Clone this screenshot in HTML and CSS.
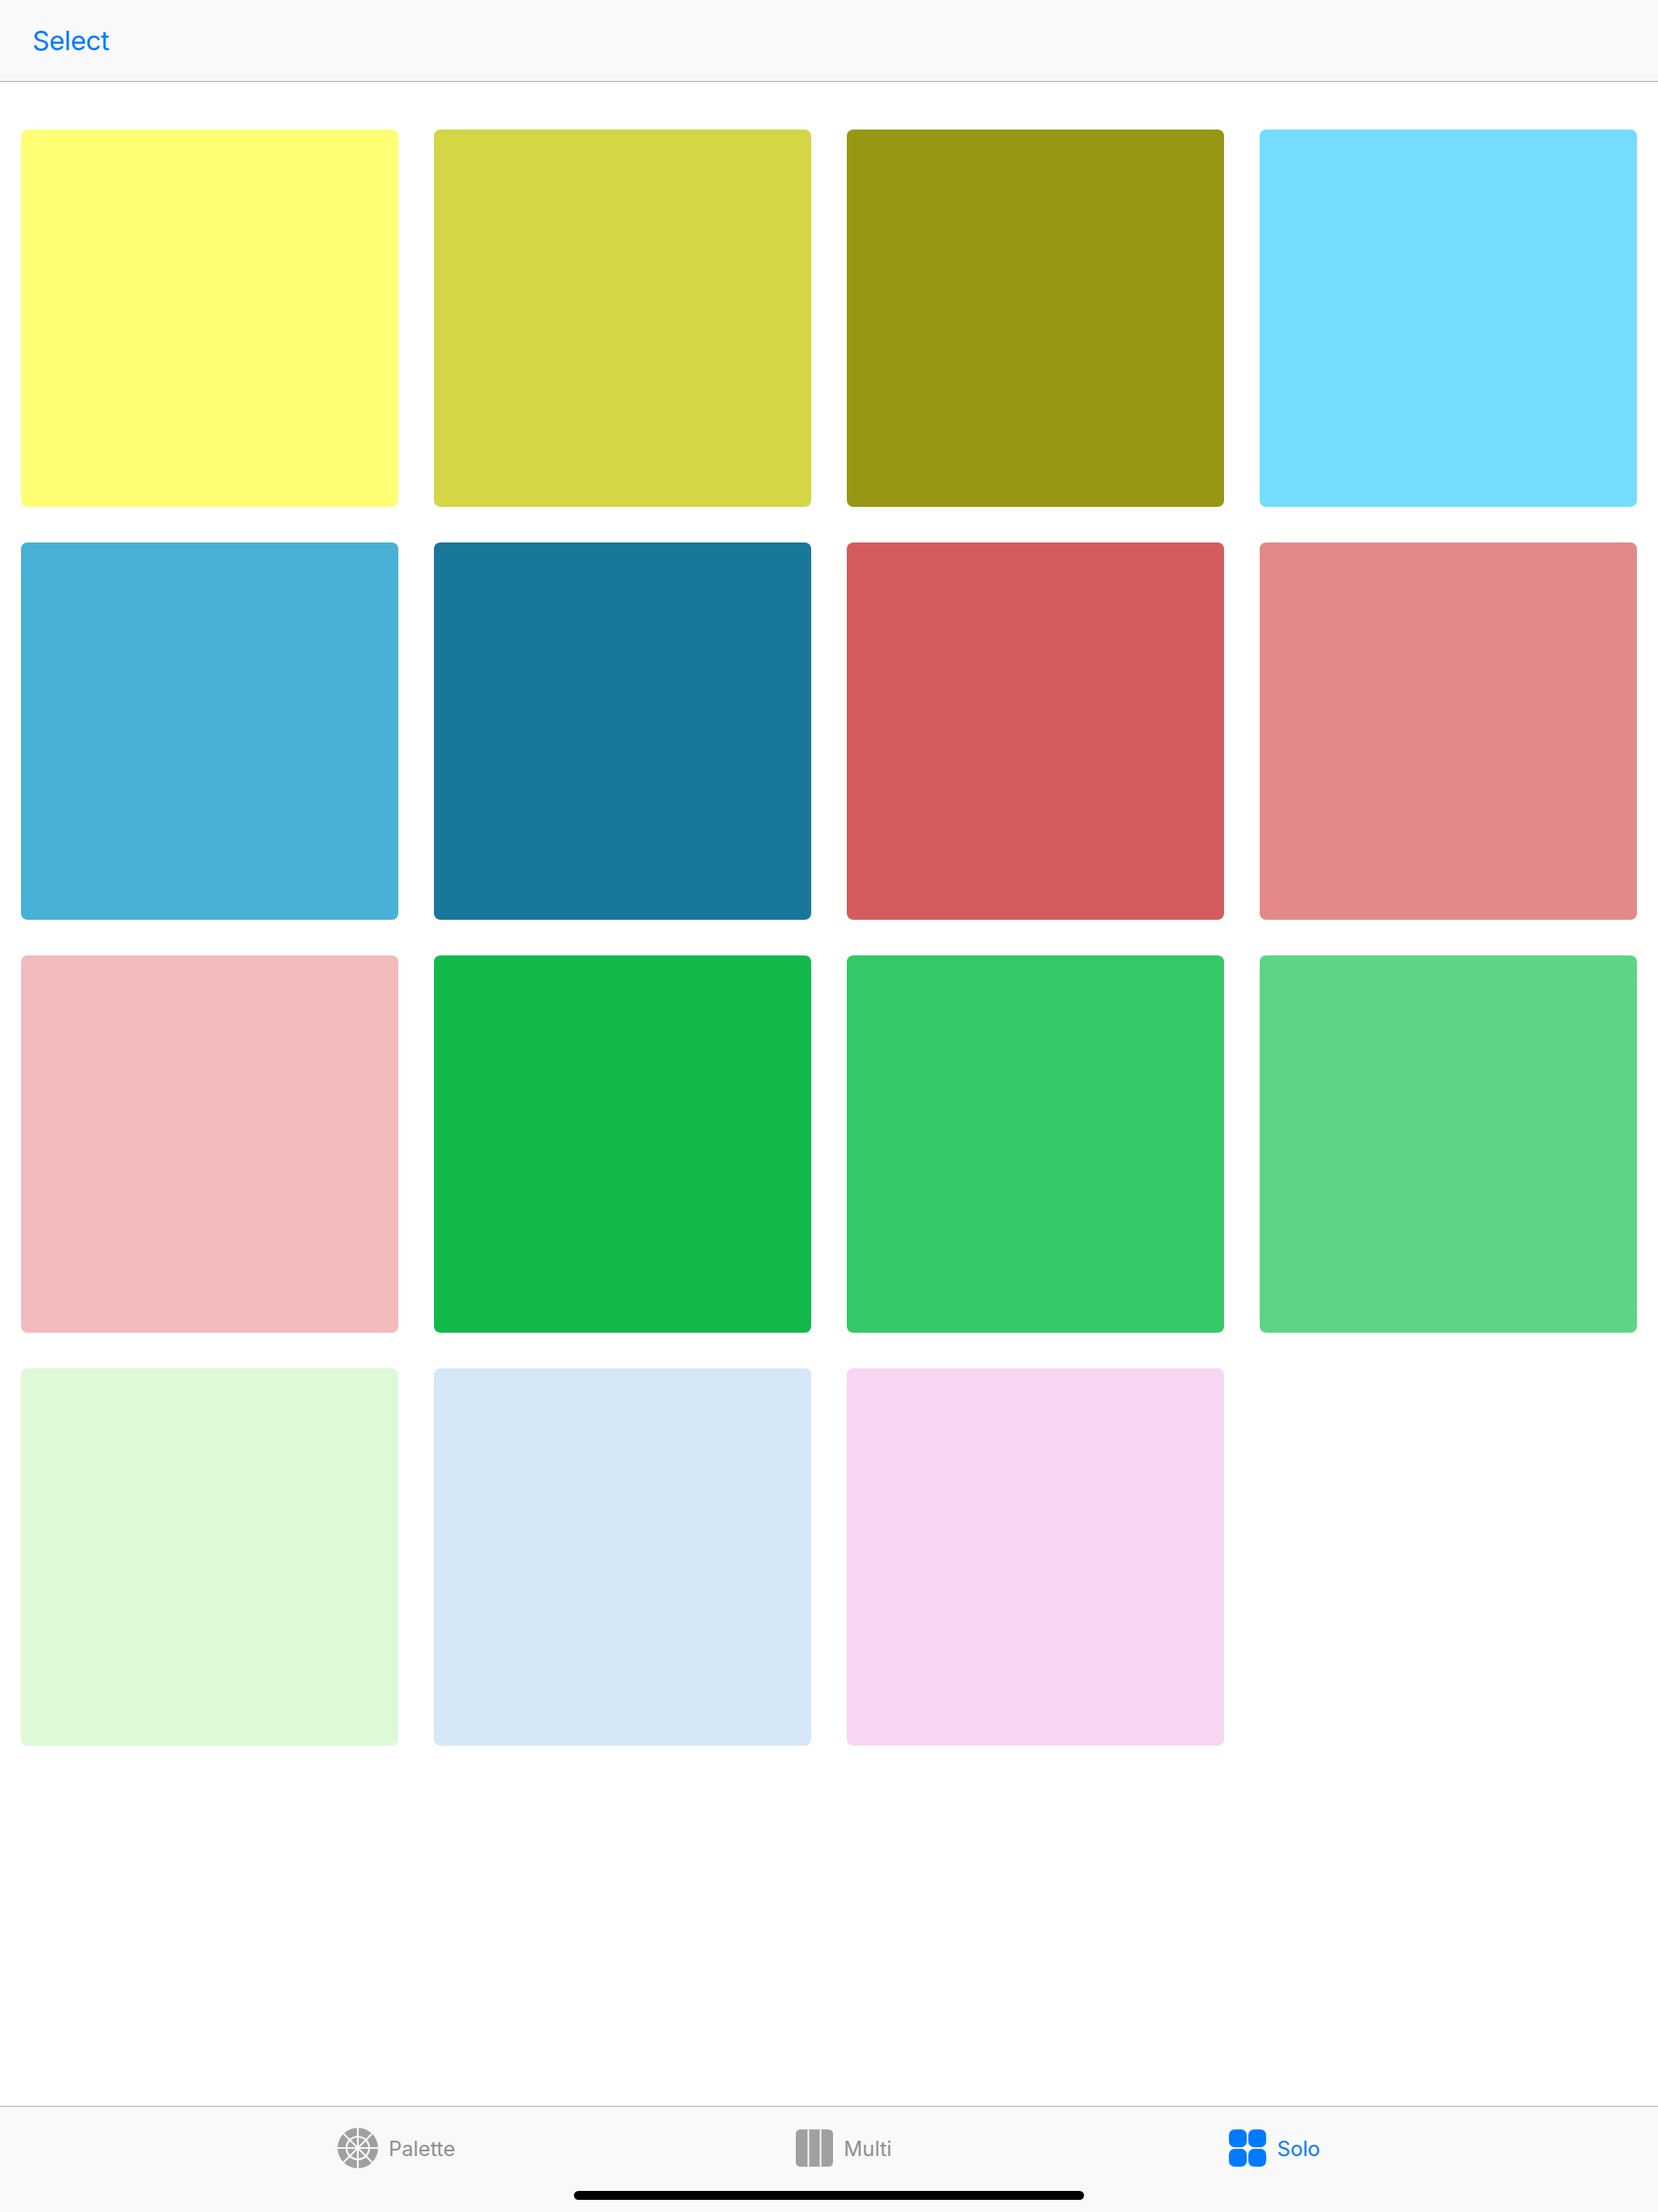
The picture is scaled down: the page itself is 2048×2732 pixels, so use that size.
FILE: index.html
```html
<!DOCTYPE html>
<html lang="en">
<head>
  <meta charset="UTF-8" />
  <meta name="viewport" content="width=device-width, initial-scale=1.0"/>
  <title>Solo</title>
  <link rel="stylesheet" href="styles.css">
</head>
<body>
  <div class="app">
    <header class="navbar">
      <a class="select-btn">Select</a>
    </header>

    <main class="swatches">
      <div class="swatch c1"></div>
      <div class="swatch c2"></div>
      <div class="swatch c3"></div>
      <div class="swatch c4"></div>
      <div class="swatch c5"></div>
      <div class="swatch c6"></div>
      <div class="swatch c7"></div>
      <div class="swatch c8"></div>
      <div class="swatch c9"></div>
      <div class="swatch c10"></div>
      <div class="swatch c11"></div>
      <div class="swatch c12"></div>
      <div class="swatch c13"></div>
      <div class="swatch c14"></div>
      <div class="swatch c15"></div>
    </main>

    <footer class="tabbar">
      <div class="tabs">
        <div class="tab tab-palette">
          <svg class="tab-icon" viewBox="0 0 50 50">
            <circle cx="25" cy="25" r="25" fill="#a0a0a0"/>
            <g fill="none" stroke="#f9f9f9" stroke-width="2.2">
              <circle cx="25" cy="25" r="14"/>
              <path d="M25 0V50M0 25H50M7.3 7.3L42.7 42.7M42.7 7.3L7.3 42.7"/>
            </g>
          </svg>
          <span>Palette</span>
        </div>
        <div class="tab tab-multi">
          <svg class="tab-icon" viewBox="0 0 46 46">
            <path fill="#a0a0a0" d="M14.5 0V46H6Q0 46 0 40V6Q0 0 6 0ZM16.5 0H29.5V46H16.5ZM31.5 0H40Q46 0 46 6V40Q46 46 40 46H31.5Z"/>
          </svg>
          <span>Multi</span>
        </div>
        <div class="tab tab-solo active">
          <svg class="tab-icon" viewBox="0 0 46 46">
            <rect x="0" y="0" width="22" height="22" rx="7" fill="#007aff"/>
            <rect x="24" y="0" width="22" height="22" rx="7" fill="#007aff"/>
            <rect x="0" y="24" width="22" height="22" rx="7" fill="#007aff"/>
            <rect x="24" y="24" width="22" height="22" rx="7" fill="#007aff"/>
          </svg>
          <span>Solo</span>
        </div>
      </div>
      <div class="home-indicator"></div>
    </footer>
  </div>
</body>
</html>
```

FILE: styles.css
```css
body {
  margin: 0;
  background: #fff;
  font-family: Inter, "Liberation Sans", sans-serif;
}
.app {
  display: flex;
  flex-direction: column;
  height: 2732px;
}
.navbar {
  height: 100px;
  background: #f9f9f9;
  border-bottom: 1px solid #adadad;
  display: flex;
  align-items: center;
  padding-left: 40px;
}
.select-btn {
  color: #007aff;
  font-size: 33px;
  letter-spacing: -0.4px;
}
.swatches {
  flex: 1;
  display: grid;
  grid-template-columns: repeat(4, 466px);
  grid-auto-rows: 466px;
  gap: 44px;
  padding: 59px 26px 0;
}
.swatch {
  border-radius: 8px;
}
.c1 { background: #ffff74; }
.c2 { background: #d4d646; }
.c3 { background: #979714; }
.c4 { background: #73dcff; }
.c5 { background: #48b1d5; }
.c6 { background: #197899; }
.c7 { background: #d55c5e; }
.c8 { background: #e48989; }
.c9 { background: #f2bbbc; }
.c10 { background: #11ba4b; }
.c11 { background: #34c966; }
.c12 { background: #5cd685; }
.c13 { background: #ddf9d8; }
.c14 { background: #d6e7f7; }
.c15 { background: #f7d6f1; }

.tabbar {
  height: 130px;
  background: #f9f9f9;
  border-top: 1px solid #adadad;
  display: flex;
  flex-direction: column;
}
.tabs {
  display: flex;
  height: 102px;
}
.tab {
  display: flex;
  align-items: center;
  gap: 13px;
  color: #8e8e8e;
  font-size: 25.5px;
}
.tab-palette {
  margin-left: 417px;
}
.tab-palette .tab-icon {
  width: 50px;
  height: 50px;
}
.tab-multi {
  margin-left: 421px;
}
.tab-solo {
  margin-left: 416px;
  gap: 14px;
}
.tab-icon {
  width: 46px;
  height: 46px;
}
.tab.active {
  color: #007aff;
}
.home-indicator {
  width: 630px;
  height: 11px;
  border-radius: 6px;
  background: #000;
  margin: 2px auto 0;
}
```
